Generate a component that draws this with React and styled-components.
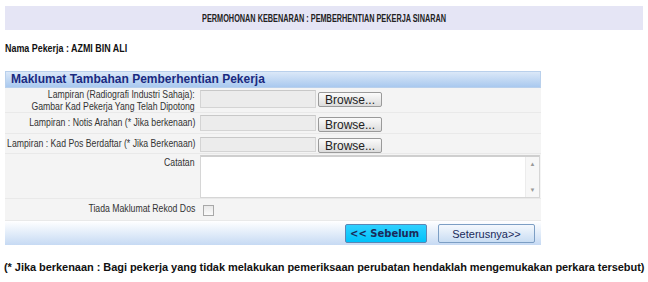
import React from "react";
import styled, { createGlobalStyle } from "styled-components";

const GlobalStyle = createGlobalStyle`
  html, body { margin: 0; padding: 0; background: #fff; }
  body { font-family: "Liberation Sans", Arial, sans-serif; color: #111; }
`;

const Page = styled.div`
  padding: 6px 5px 0 5px;
  width: 638px;
`;

const Squeeze = styled.span`
  display: inline-block;
  flex: none;
  white-space: nowrap;
  transform: scaleX(${(p) => p.$sx});
  transform-origin: ${(p) => p.$origin || "left"} center;
`;

const TitleBar = styled.div`
  height: 24px;
  background: #e5e5f5;
  display: flex;
  align-items: center;
  justify-content: center;
  font-weight: bold;
  font-size: 10px;
  color: #222;
`;

const Worker = styled.div`
  margin-top: 12px;
  height: 12px;
  line-height: 12px;
  font-weight: bold;
  font-size: 11px;
  color: #111;
`;

const Panel = styled.div`
  margin-top: 17px;
  width: 536px;
`;

const PanelHeader = styled.div`
  height: 15px;
  border: 1px solid #b9d0ec;
  background: linear-gradient(#dbe8f8, #a9c9ef);
  font-weight: bold;
  font-size: 12px;
  line-height: 15px;
  color: #1a2a80;
  padding-left: 5px;
`;

const Row = styled.div`
  display: grid;
  grid-template-columns: 190px 1fr;
  column-gap: 5px;
  height: ${(p) => p.$h}px;
  background: #f4f4f4;
  border-bottom: 1px solid #e9e9e9;
  box-sizing: border-box;
`;

const Label = styled.div`
  display: flex;
  justify-content: flex-end;
  align-items: flex-start;
  text-align: right;
  font-size: 11px;
  line-height: 12px;
  color: #333;
  padding-top: ${(p) => p.$pt || 0}px;
  min-width: 0;
`;

const Field = styled.div`
  display: flex;
  align-items: flex-start;
  gap: 2px;
  padding-top: ${(p) => p.$pt || 0}px;
`;

const FileBox = styled.div`
  width: 114px;
  height: ${(p) => p.$h || 16}px;
  background: #ececec;
  border: 1px solid #d4d4d4;
  border-top-color: #c8c8c8;
`;

const BrowseButton = styled.button`
  margin-top: ${(p) => p.$mt || 0}px;
  width: 62px;
  height: 13px;
  padding: 0;
  border: 1px solid #9a9a9a;
  border-radius: 2px;
  background: linear-gradient(#fbfbfb, #dcdcdc);
  font-family: "Liberation Sans", Arial, sans-serif;
  font-size: 12px;
  line-height: 12px;
  color: #222;
  box-sizing: content-box;
  text-align: center;
`;

const TextArea = styled.div`
  width: 338px;
  height: 40px;
  background: #fff;
  border: 1px solid #d6d6d6;
  border-top: 2px solid #cfcfcf;
  display: flex;
  justify-content: flex-end;
`;

const ScrollBar = styled.div`
  width: 13px;
  border-left: 1px solid #ececec;
  background: #f7f7f7;
  display: flex;
  flex-direction: column;
  justify-content: space-between;
  align-items: center;
  padding: 4px 0;
  font-size: 6px;
  color: #999;
`;

const CheckBox = styled.div`
  margin-left: 3px;
  width: 9px;
  height: 9px;
  border: 1px solid #a8a8a8;
  background: linear-gradient(#e9e9e9, #fafafa);
`;

const Footer = styled.div`
  height: 24px;
  background: linear-gradient(#ffffff, #c6daf3);
  display: flex;
  justify-content: flex-end;
  align-items: flex-start;
  padding-top: 3px;
  padding-right: 6px;
  gap: 11px;
  box-sizing: border-box;
`;

const NavButton = styled.button`
  width: ${(p) => p.$w}px;
  height: 19px;
  border: 1px solid ${(p) => (p.$primary ? "#5c86b4" : "#7c9ec4")};
  border-radius: 2px;
  background: ${(p) =>
    p.$primary
      ? "linear-gradient(#30d0ff, #00c2fa)"
      : "linear-gradient(#f4f8fd, #c9ddf3)"};
  font-family: ${(p) =>
    p.$primary ? '"DejaVu Sans", Verdana, sans-serif' : '"Liberation Sans", Arial, sans-serif'};
  font-weight: ${(p) => (p.$primary ? "bold" : "normal")};
  font-size: ${(p) => (p.$primary ? 10 : 11)}px;
  color: #1a2a5a;
  text-align: ${(p) => (p.$primary ? "left" : "center")};
  padding: 0 0 0 ${(p) => (p.$primary ? 4 : 0)}px;
`;

const Footnote = styled.div`
  margin-top: 16px;
  margin-left: -1px;
  font-weight: bold;
  font-size: 11px;
  letter-spacing: -0.05px;
  white-space: nowrap;
  color: #111;
`;

const LABEL_SX = 0.79;

export default function App() {
  return (
    <>
      <GlobalStyle />
      <Page>
        <TitleBar>
          <Squeeze $sx={0.73} $origin="center">
            PERMOHONAN KEBENARAN : PEMBERHENTIAN PEKERJA SINARAN
          </Squeeze>
        </TitleBar>
        <Worker>
          <Squeeze $sx={0.81}>Nama Pekerja : AZMI BIN ALI</Squeeze>
        </Worker>
        <Panel>
          <PanelHeader>Maklumat Tambahan Pemberhentian Pekerja</PanelHeader>
          <Row $h={25}>
            <Label $pt={0}>
              <Squeeze $sx={LABEL_SX} $origin="right">
                Lampiran (Radiografi Industri Sahaja):
                <br />
                Gambar Kad Pekerja Yang Telah Dipotong
              </Squeeze>
            </Label>
            <Field $pt={2}>
              <FileBox $h={16} />
              <BrowseButton $mt={2}>Browse...</BrowseButton>
            </Field>
          </Row>
          <Row $h={21}>
            <Label $pt={3}>
              <Squeeze $sx={LABEL_SX} $origin="right">
                Lampiran : Notis Arahan (* Jika berkenaan)
              </Squeeze>
            </Label>
            <Field $pt={2}>
              <FileBox $h={14} />
              <BrowseButton $mt={2}>Browse...</BrowseButton>
            </Field>
          </Row>
          <Row $h={20}>
            <Label $pt={3}>
              <Squeeze $sx={LABEL_SX} $origin="right">
                Lampiran : Kad Pos Berdaftar (* Jika Berkenaan)
              </Squeeze>
            </Label>
            <Field $pt={3}>
              <FileBox $h={13} />
              <BrowseButton $mt={1}>Browse...</BrowseButton>
            </Field>
          </Row>
          <Row $h={45}>
            <Label $pt={2}>
              <Squeeze $sx={LABEL_SX} $origin="right">Catatan</Squeeze>
            </Label>
            <Field $pt={1}>
              <TextArea>
                <ScrollBar>
                  <span>▲</span>
                  <span>▼</span>
                </ScrollBar>
              </TextArea>
            </Field>
          </Row>
          <Row $h={22}>
            <Label $pt={3}>
              <Squeeze $sx={LABEL_SX} $origin="right">Tiada Maklumat Rekod Dos</Squeeze>
            </Label>
            <Field $pt={6}>
              <CheckBox />
            </Field>
          </Row>
          <Footer>
            <NavButton $primary $w={82}>&lt;&lt; Sebelum</NavButton>
            <NavButton $w={97}>Seterusnya&gt;&gt;</NavButton>
          </Footer>
        </Panel>
        <Footnote>
          (* Jika berkenaan : Bagi pekerja yang tidak melakukan pemeriksaan perubatan hendaklah mengemukakan perkara tersebut)
        </Footnote>
      </Page>
    </>
  );
}
